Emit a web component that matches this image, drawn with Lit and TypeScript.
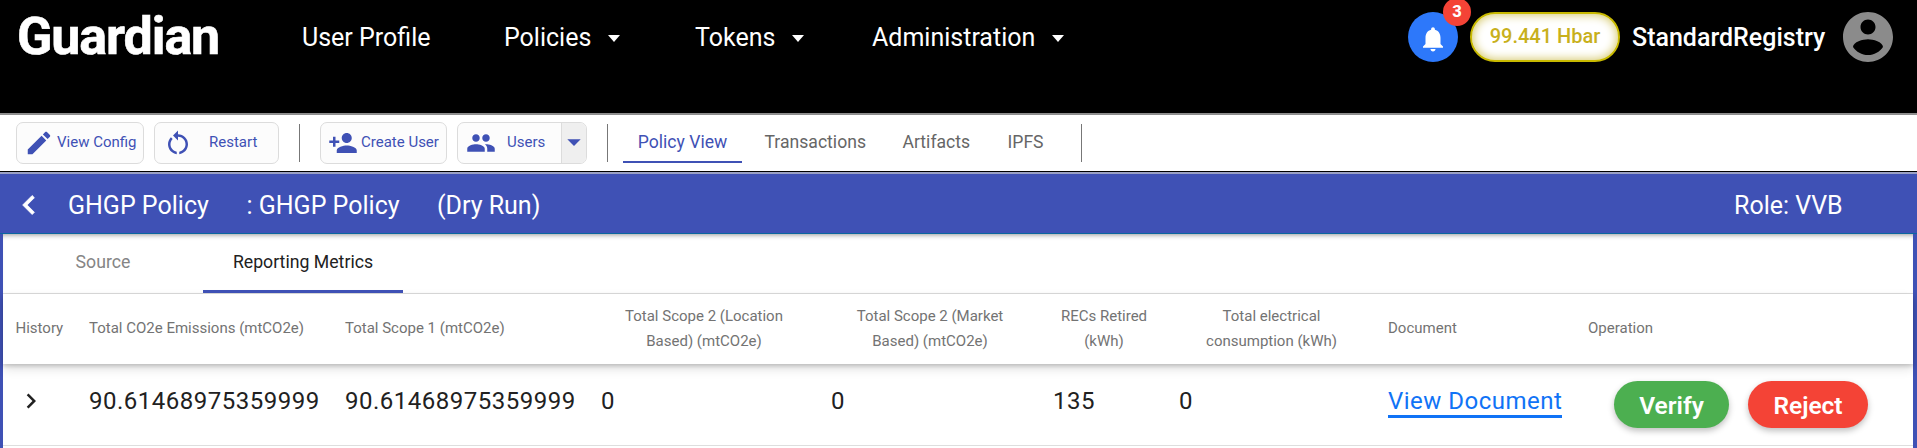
import { LitElement, html, css, svg } from "lit";
import { customElement } from "lit/decorators.js";

const ICONS: Record<string, string> = {
  edit: "M3 17.25V21h3.75L17.81 9.94l-3.75-3.75L3 17.25zM20.71 7.04c.39-.39.39-1.02 0-1.41l-2.34-2.34c-.39-.39-1.02-.39-1.41 0l-1.83 1.83 3.75 3.75 1.83-1.83z",
  restart: "M12 5V2L8 6l4 4V7c3.31 0 6 2.69 6 6 0 2.97-2.17 5.43-5 5.91v2.02c3.95-.49 7-3.85 7-7.93 0-4.42-3.58-8-8-8zm-6 8c0-1.65.67-3.15 1.76-4.24L6.34 7.34C4.9 8.79 4 10.79 4 13c0 4.08 3.05 7.44 7 7.93v-2.02c-2.83-.48-5-2.94-5-5.91z",
  personAdd: "M15 12c2.21 0 4-1.79 4-4s-1.79-4-4-4-4 1.79-4 4 1.79 4 4 4zm-9-2V7H4v3H1v2h3v3h2v-3h3v-2H6zm9 4c-2.67 0-8 1.34-8 4v2h16v-2c0-2.66-5.33-4-8-4z",
  people: "M16 11c1.66 0 2.99-1.34 2.99-3S17.66 5 16 5c-1.66 0-3 1.34-3 3s1.34 3 3 3zm-8 0c1.66 0 2.99-1.34 2.99-3S9.66 5 8 5C6.34 5 5 6.34 5 8s1.34 3 3 3zm0 2c-2.33 0-7 1.17-7 3.5V19h14v-2.5c0-2.33-4.67-3.5-7-3.5zm8 0c-.29 0-.62.02-.97.05 1.16.84 1.97 1.97 1.97 3.45V19h6v-2.5c0-2.33-4.67-3.5-7-3.5z",
  bell: "M12 22c1.1 0 2-.9 2-2h-4c0 1.1.89 2 2 2zm6-6v-5c0-3.07-1.64-5.64-4.5-6.32V4c0-.83-.67-1.5-1.5-1.5s-1.5.67-1.5 1.5v.68C7.63 5.36 6 7.92 6 11v5l-2 2v1h16v-1l-2-2z",
  account: "M12 2C6.48 2 2 6.48 2 12s4.48 10 10 10 10-4.48 10-10S17.52 2 12 2zm0 3c1.66 0 3 1.34 3 3s-1.34 3-3 3-3-1.34-3-3 1.34-3 3-3zm0 14.2c-2.5 0-4.71-1.28-6-3.22.03-1.99 4-3.08 6-3.08 1.99 0 5.97 1.09 6 3.08-1.29 1.94-3.5 3.22-6 3.22z",
  left: "M15.41 7.41L14 6l-6 6 6 6 1.41-1.41L10.83 12z",
  right: "M10 6L8.59 7.41 13.17 12l-4.58 4.59L10 18l6-6z",
  drop: "M7 10l5 5 5-5z",
};

const icon = (name: string, size: number) =>
  html`<svg class="icon ${name}" width=${size} height=${size} viewBox="0 0 24 24">${svg`<path d=${ICONS[name]} />`}</svg>`;

@customElement("app-root")
export class AppRoot extends LitElement {
  static styles = css`
    :host { display: block; height: 448px; overflow: hidden; background: #fff; font-family: Roboto, sans-serif; color: #212121; }
    * { box-sizing: border-box; }
    .icon { display: block; fill: currentColor; flex: none; }
    .left { stroke: currentColor; stroke-width: .5; margin-left: -2px; }
    .top { height: 113px; background: #000; color: #fff; display: flex; align-items: flex-start; padding: 0 19px 0 17px; white-space: nowrap; }
    .brand { width: 285px; font-size: 52px; line-height: 74px; font-weight: 700; letter-spacing: -1.1px; -webkit-text-stroke: .6px #fff; }
    .nav { display: flex; font-size: 25px; flex: 1; }
    .nav-item { display: flex; align-items: center; height: 75px; }
    .n0 { width: 202px; } .n1 { width: 191px; } .n2 { width: 177px; }
    .caret { width: 0; height: 0; border: 6.5px solid transparent; border-top: 7px solid currentColor; border-bottom: 0; margin-left: 17px; margin-top: 2px; }
    .account-area { display: flex; align-items: center; height: 74px; }
    .bell-wrap { position: relative; width: 50px; height: 50px; border-radius: 50%; background: #2d78fa; display: grid; place-items: center; padding-top: 4px; margin-right: 12px; }
    .badge { position: absolute; left: 35px; top: -14px; width: 28px; height: 28px; border-radius: 50%; background: #f44336; font-size: 16.5px; line-height: 27px; text-align: center; font-weight: 800; }
    .balance { width: 150px; height: 50px; border-radius: 25px; border: 2px solid #c8b900; background: #fff; color: #c8b01c; box-shadow: inset 0 0 10px 1px #d5c86a; font-size: 20px; font-weight: 500; line-height: 45px; text-align: center; margin-right: 12px; }
    .user { font-size: 25px; font-weight: 500; width: 206px; }
    .avatar { color: #8b8b8b; }
    .tools { height: 61px; border-top: 2px solid #8e8e8e; border-bottom: 2px solid #9aa0c4; display: flex; align-items: center; padding: 0 0 1px 16px; color: #3f51b5; box-shadow: inset 0 -1px #000; }
    .btn { height: 42px; border: 1px solid #dcdcdc; border-radius: 7px; background: #fcfcfc; display: flex; align-items: center; font-size: 15px; white-space: nowrap; }
    .btn > .label { padding-bottom: 3px; }
    .config { width: 128px; padding-left: 7px; margin-right: 10px; gap: 3px; }
    .restart-btn { width: 125px; padding-left: 8px; margin-right: 20px; gap: 16px; }
    .create { width: 127px; padding-left: 7px; margin: 0 10px 0 20px; gap: 3px; }
    .users { width: 130px; padding-left: 8px; margin-right: 20px; gap: 11px; overflow: hidden; }
    .split { margin-left: auto; align-self: stretch; width: 25px; background: #efefef; border-left: 1px solid #dcdcdc; display: grid; place-items: center; justify-content: center; grid-template-columns: 24px; }
    .split .icon { margin: -3px -4px 0; }
    .sep { width: 1px; height: 38px; background: #777; }
    .views { display: flex; margin: 0 34px 0 15px; height: 39px; padding-top: 1px; font-size: 17.6px; color: #666; }
    .view { padding: 0 0 0 22.5px; line-height: 34px; }
    .view.on { width: 119px; padding: 0; text-align: center; color: #3f51b5; border-bottom: 2px solid #3f51b5; }
    .w1 { width: 138px; } .w2 { width: 105px; } .w3 { width: 62px; }
    .policy { height: 60px; background: #3f51b5; border-bottom: 1px solid #0b66a0; color: #fff; font-size: 25px; display: flex; align-items: center; padding: 3px 0 0 12px; white-space: nowrap; }
    .p0 { margin-left: 20px; width: 178.5px; } .p1 { width: 190.5px; } .p2 { flex: 1; } .role { width: 183px; }
    .panel { border: solid #3f51b5; border-width: 0 4px 0 3px; height: 214px; }
    .tabs { height: 60px; border-bottom: 1px solid #dedede; display: flex; font-size: 17.7px; box-shadow: inset 0 5px 5px -4px #999; }
    .tab { width: 200px; text-align: center; line-height: 57px; color: #858585; }
    .tab.on { color: #212121; border-bottom: 3px solid #3f51b5; }
    .row { display: grid; grid-template-columns: 49.5px 232px 232px 206px 198px 102px 185px 176px 1fr; column-gap: 24px; padding: 0 0 0 12.5px; align-items: center; }
    .head { height: 70px; padding-bottom: 1px; font-size: 15px; line-height: 25px; color: #737373; box-shadow: 0 2px 4px rgba(0,0,0,.18), 0 5px 10px rgba(0,0,0,.12); white-space: pre; }
    .mid { text-align: center; }
    .data { height: 82px; border-bottom: 1px solid #dedede; font-size: 24px; letter-spacing: .5px; padding-bottom: 7px; }
    .link { color: #1073f6; border-bottom: 3px solid #1073f6; justify-self: start; line-height: 28px; padding-top: 3px; white-space: nowrap; }
    .ops { display: flex; gap: 19px; padding: 6px 0 0 26px; }
    .pill { height: 47px; border-radius: 24px; color: #fff; font-size: 24.5px; font-weight: 600; letter-spacing: 0; line-height: 49px; text-align: center; box-shadow: 0 3px 6px rgba(0,0,0,.25); }
    .verify { width: 115px; background: #4caf50; } .reject { width: 120px; background: #f44336; }
  `;

  heads = ["History", "Total CO2e Emissions (mtCO2e)", "Total Scope 1 (mtCO2e)", "Total Scope 2 (Location\nBased) (mtCO2e)", "Total Scope 2 (Market\nBased) (mtCO2e)", "RECs Retired\n(kWh)", "Total electrical\nconsumption (kWh)", "Document", "Operation"];
  values = ["90.61468975359999", "90.61468975359999", "0", "0", "135", "0"];
  menu = ["User Profile", "Policies", "Tokens", "Administration"];

  render() {
    return html`
      <header class="top">
        <div class="brand">Guardian</div>
        <nav class="nav">
          ${this.menu.map((m, i) => html`<div class="nav-item n${i}"><span>${m}</span>${i ? html`<i class="caret"></i>` : ""}</div>`)}
        </nav>
        <div class="account-area">
          <div class="bell-wrap">${icon("bell", 30)}<span class="badge">3</span></div>
          <div class="balance">99.441 Hbar</div>
          <div class="user">StandardRegistry</div>
          <div class="avatar">${icon("account", 60)}</div>
        </div>
      </header>
      <div class="tools">
        <div class="btn config">${icon("edit", 30)}<span class="label">View Config</span></div>
        <div class="btn restart-btn">${icon("restart", 30)}<span class="label">Restart</span></div>
        <i class="sep"></i>
        <div class="btn create">${icon("personAdd", 30)}<span class="label">Create User</span></div>
        <div class="btn users">${icon("people", 30)}<span class="label">Users</span><span class="split">${icon("drop", 32)}</span></div>
        <i class="sep"></i>
        <div class="views">
          <div class="view on">Policy View</div>
          <div class="view w1">Transactions</div>
          <div class="view w2">Artifacts</div>
          <div class="view w3">IPFS</div>
        </div>
        <i class="sep"></i>
      </div>
      <div class="policy">
        ${icon("left", 38)}
        <span class="p0">GHGP Policy</span><span class="p1">: GHGP Policy</span><span class="p2">(Dry Run)</span>
        <span class="role">Role: VVB</span>
      </div>
      <main class="panel">
        <div class="tabs"><div class="tab">Source</div><div class="tab on">Reporting Metrics</div></div>
        <div class="row head">${this.heads.map((h) => html`<div class=${h.includes("\n") ? "mid" : "cell"}>${h}</div>`)}</div>
        <div class="row data">
          <div>${icon("right", 30)}</div>
          ${this.values.map((v) => html`<div>${v}</div>`)}
          <div class="link">View Document</div>
          <div class="ops"><div class="pill verify">Verify</div><div class="pill reject">Reject</div></div>
        </div>
      </main>
    `;
  }
}
